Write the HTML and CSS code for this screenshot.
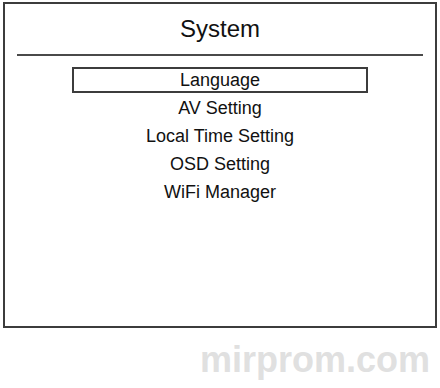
FILE: index.html
```html
<!DOCTYPE html>
<html>
<head>
  <link rel="stylesheet" href="styles.css">
</head>
<body>
  <div class="screen">
    <h2 class="title">System</h2>
    <div class="rule"></div>
    <ul class="menu">
      <li class="selected">Language</li>
      <li>AV Setting</li>
      <li>Local Time Setting</li>
      <li>OSD Setting</li>
      <li>WiFi Manager</li>
    </ul>
  </div>
  <div class="mark">mirprom.com</div>
</body>
</html>
```

FILE: styles.css
```css
body {
  margin: 0;
  background: #fff;
  font-family: "Liberation Sans", Arial, sans-serif;
  color: #111;
}
.screen {
  margin: 2px 3px 0;
  height: 326px;
  box-sizing: border-box;
  border: 2px solid #3c3c3c;
}
.title {
  margin: 0;
  font-size: 24px;
  font-weight: normal;
  line-height: 50px;
  text-align: center;
}
.rule {
  margin: 0 12px;
  border-top: 2px solid #4a4a4a;
}
.menu {
  list-style: none;
  margin: 0;
  padding: 10px 0 0;
  font-size: 18px;
}
.menu li {
  height: 28px;
  line-height: 28px;
  text-align: center;
}
.menu li.selected {
  width: 296px;
  height: 26px;
  line-height: 22px;
  margin: 1px auto;
  box-sizing: border-box;
  border: 2px solid #3c3c3c;
}
.mark {
  margin-top: 12px;
  padding-right: 10px;
  text-align: right;
  font-size: 36px;
  font-weight: bold;
  line-height: 40px;
  color: #e0e0e0;
}
```
